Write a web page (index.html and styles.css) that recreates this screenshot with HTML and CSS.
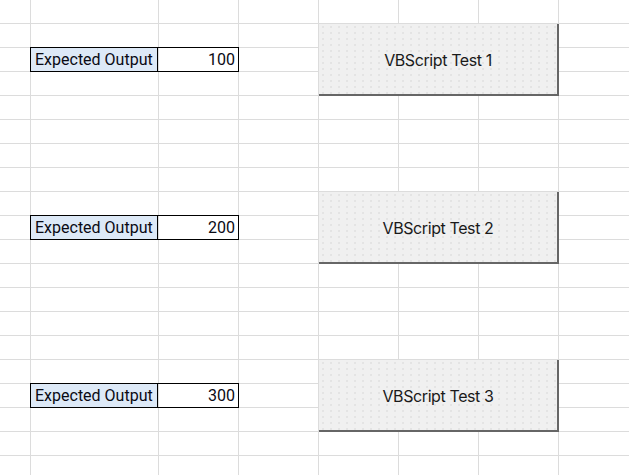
FILE: index.html
```html
<!DOCTYPE html>
<html lang="en">
<head>
  <meta charset="UTF-8" />
  <meta name="viewport" content="width=device-width, initial-scale=1.0"/>
  <title>VBScript Tests</title>
  <link rel="stylesheet" href="styles.css">
</head>
<body>

<div class="sheet">
  <!-- Test 1 -->
  <div class="case">
    <div class="output">
      <span class="label">Expected Output</span>
      <span class="value">100</span>
    </div>
    <button class="macro-btn">VBScript Test 1</button>
  </div>

  <!-- Test 2 -->
  <div class="case">
    <div class="output">
      <span class="label">Expected Output</span>
      <span class="value">200</span>
    </div>
    <button class="macro-btn">VBScript Test 2</button>
  </div>

  <!-- Test 3 -->
  <div class="case">
    <div class="output">
      <span class="label">Expected Output</span>
      <span class="value">300</span>
    </div>
    <button class="macro-btn">VBScript Test 3</button>
  </div>
</div>

</body>
</html>
```

FILE: styles.css
```css
body {
  margin: 0;
  background: #fff;
  font-family: Roboto, sans-serif;
}

/* spreadsheet area with gridlines */
.sheet {
  width: 629px;
  height: 475px;
  overflow: hidden;
  box-sizing: border-box;
  padding-top: 23px;
  background-color: #fff;
  background-image:
    repeating-linear-gradient(to bottom, transparent 0 23px, #dcdcdc 23px 24px),
    linear-gradient(#dcdcdc, #dcdcdc),
    repeating-linear-gradient(to right, #dcdcdc 0 1px, transparent 1px 80px);
  background-size: 100% 100%, 1px 100%, 480px 100%;
  background-position: 0 0, 30px 0, 158px 0;
  background-repeat: repeat, no-repeat, no-repeat;
}

.case {
  height: 168px;
  display: grid;
  grid-template-columns: 30px 208px 80px 240px;
  grid-template-rows: 24px 24px 24px;
}

.output {
  grid-column: 2;
  grid-row: 2;
  display: flex;
  width: 209px;
  height: 25px;
  box-sizing: border-box;
  border: 1px solid #000;
  font-size: 16px;
  color: #0a0a14;
}

.label {
  width: 127px;
  border-right: 1px solid #000;
  background: #dde9f7;
  padding: 1px 0 0 4px;
  box-sizing: border-box;
  line-height: 22px;
}

.value {
  flex: 1;
  text-align: right;
  padding: 1px 3px 0 0;
  line-height: 22px;
}

.macro-btn {
  grid-column: 4;
  grid-row: 1 / span 3;
  margin: 1px 0 0 1px;
  width: 240px;
  height: 72px;
  box-sizing: border-box;
  border: none;
  border-right: 2px solid #666;
  border-bottom: 2px solid #666;
  background-color: #f0f0f0;
  background-image: radial-gradient(circle, #dadada 0.5px, transparent 1px);
  background-size: 8px 6px;
  font-family: Inter, sans-serif;
  font-size: 16px;
  letter-spacing: -0.4px;
  color: #1a1a1a;
  padding: 2px 0 0 0;
  cursor: pointer;
}
```
